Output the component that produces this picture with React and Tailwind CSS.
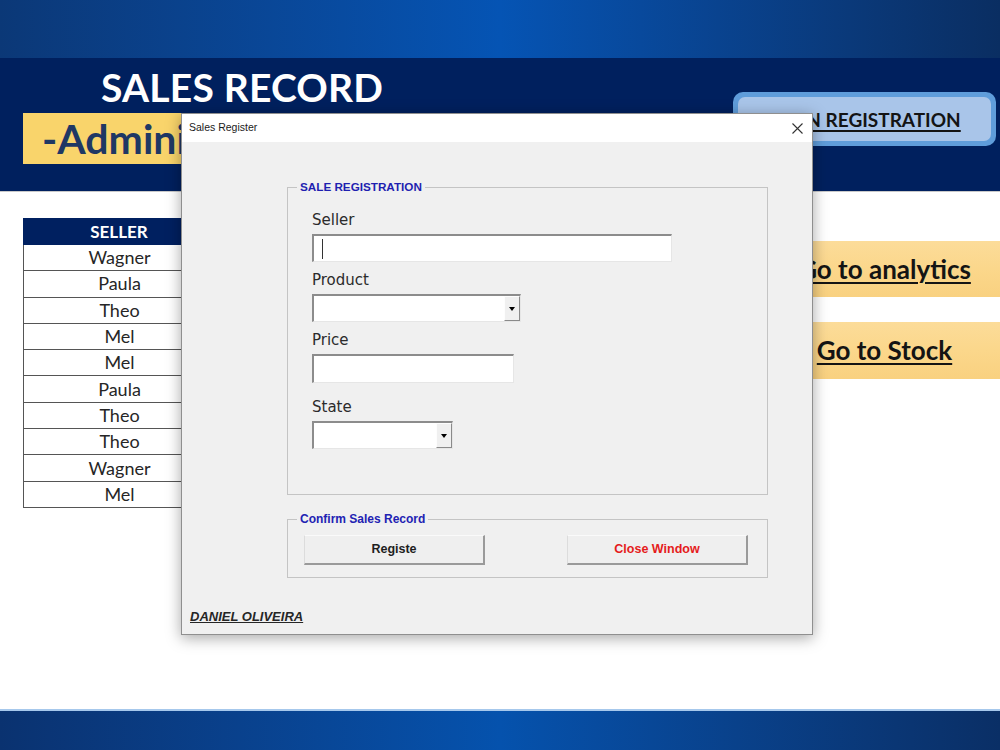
export default function App() {
  const sellers = ["Wagner", "Paula", "Theo", "Mel", "Mel", "Paula", "Theo", "Theo", "Wagner", "Mel"];

  const inputCls =
    "mt-[5px] h-[28px] bg-white border-t-2 border-l-2 border-r border-b border-t-[#8c8c8c] border-l-[#8c8c8c] border-r-[#e6e6e6] border-b-[#e6e6e6]";

  const Combo = ({ w }) => (
    <div className={`${inputCls} flex justify-end`} style={{ width: w }}>
      <div className="w-[16px] h-full bg-[#f0f0f0] border-l border-t border-l-[#fdfdfd] border-t-[#fdfdfd] border-r border-b border-r-[#8a8a8a] border-b-[#8a8a8a] flex items-center justify-center">
        <div className="w-0 h-0 border-l-[3px] border-r-[3px] border-t-[4px] border-l-transparent border-r-transparent border-t-black" />
      </div>
    </div>
  );

  return (
    <div className="relative w-[1000px] h-[750px] overflow-hidden bg-white flex flex-col font-['Lato',sans-serif]">
      {/* top bar */}
      <div className="h-[58px] bg-linear-to-r from-[#0b3877] via-[#0554b4] to-[#0a2e62]" />

      {/* navy band */}
      <div className="h-[133px] bg-[#00205e] flex">
        <div className="w-[567px] flex flex-col">
          <div className="mt-[10px] ml-[101px] text-white font-bold text-[39px] leading-none tracking-[0.2px]">
            SALES RECORD
          </div>
          <div className="mt-[6px] ml-[23px] h-[51px] bg-[#f9d46b] flex items-center pl-[19px]">
            <div className="w-[139px] overflow-hidden">
              <span className="text-[#1f3864] font-bold text-[41px] leading-none whitespace-nowrap">-Admini</span>
            </div>
          </div>
        </div>
        <div className="ml-[166px] mt-[34px] w-[263px] h-[54px] rounded-[10px] bg-[#5f9ddb] p-[5px]">
          <div className="w-full h-full rounded-[7px] bg-[#a9c5e9] flex items-center justify-center pt-[2px]">
            <span className="text-[#141414] font-bold text-[19px] underline decoration-2 underline-offset-[3px]">
              OPEN REGISTRATION
            </span>
          </div>
        </div>
      </div>

      {/* white area */}
      <div className="flex-1 flex border-t border-[#c9c9c9]">
        <div className="ml-[23px] mt-[26px] w-[192px]">
          <div className="h-[27px] bg-[#002060] text-white font-bold text-[17px] flex items-center justify-center">
            SELLER
          </div>
          {sellers.map((s, i) => (
            <div
              key={i}
              className="h-[26.3px] border-l border-b border-[#555] text-[#262626] text-[18px] flex items-center justify-center"
            >
              {s}
            </div>
          ))}
        </div>
        <div className="ml-auto mt-[49px] w-[231px] flex flex-col gap-[25px]">
          <div className="h-[56px] bg-linear-to-b from-[#fcdc99] via-[#fbd78b] to-[#f9d180] flex items-center justify-center">
            <span className="text-[#141414] font-bold text-[26px] underline decoration-2 underline-offset-[3px] whitespace-nowrap">Go to analytics</span>
          </div>
          <div className="h-[57px] bg-linear-to-b from-[#fcdc99] via-[#fbd78b] to-[#f9d180] flex items-center justify-center">
            <span className="text-[#141414] font-bold text-[26px] underline decoration-2 underline-offset-[3px] whitespace-nowrap">Go to Stock</span>
          </div>
        </div>
      </div>

      {/* bottom bar */}
      <div className="h-[41px] border-t-2 border-[#a6c8ec] bg-linear-to-r from-[#0a3270] via-[#0552ad] to-[#0a2f66]" />

      {/* dialog window */}
      <div className="absolute left-[181px] top-[113px] w-[632px] h-[522px] border border-[#8f8f8f] bg-[#f0f0f0] shadow-[0_3px_14px_rgba(0,0,0,0.35)] flex flex-col">
        <div className="h-[28px] bg-white flex items-center justify-between pl-[7px] pr-[9px]">
          <span className="text-[10.5px] text-[#1a1a1a] font-['Liberation_Sans',sans-serif]">Sales Register</span>
          <svg width="11" height="11" viewBox="0 0 11 11">
            <path d="M0.5 0.5 L10.5 10.5 M10.5 0.5 L0.5 10.5" stroke="#333" strokeWidth="1.1" />
          </svg>
        </div>

        <div className="flex flex-col font-['DejaVu_Sans',sans-serif]">
          {/* frame 1 */}
          <div className="relative ml-[105px] mt-[45px] w-[481px] h-[308px] border border-[#c4c4c4] pl-[24px] pt-[23px]">
            <span className="absolute -top-[8px] left-[9px] px-[3px] bg-[#f0f0f0] text-[11.7px] leading-[14px] font-bold text-[#1f1fb0] font-['Liberation_Sans',sans-serif]">
              SALE REGISTRATION
            </span>
            <div className="text-[15px] leading-[18px] text-[#2b2b2b]">Seller</div>
            <div className={`${inputCls} w-[360px] flex items-center pl-[8px]`}>
              <div className="w-px h-[20px] bg-[#333]" />
            </div>

            <div className="mt-[9px] text-[15px] leading-[18px] text-[#2b2b2b]">Product</div>
            <Combo w={209} />

            <div className="mt-[9px] text-[15px] leading-[18px] text-[#2b2b2b]">Price</div>
            <div className={`${inputCls} w-[202px] h-[29px]`} />

            <div className="mt-[15px] text-[15px] leading-[18px] text-[#2b2b2b]">State</div>
            <Combo w={141} />
          </div>

          {/* frame 2 */}
          <div className="relative ml-[105px] mt-[24px] w-[481px] h-[59px] border border-[#c4c4c4] flex justify-between pl-[16px] pr-[19px] pt-[15px] font-['Liberation_Sans',sans-serif]">
            <span className="absolute -top-[8px] left-[9px] px-[3px] bg-[#f0f0f0] text-[12px] leading-[14px] font-bold text-[#2222b3]">
              Confirm Sales Record
            </span>
            <div className="w-[181px] h-[30px] bg-[#efefef] border-l border-t border-l-[#dcdcdc] border-t-[#fafafa] border-r-2 border-b-2 border-r-[#9a9a9a] border-b-[#9a9a9a] flex items-center justify-center text-[12.5px] font-bold text-[#1e1e1e]">
              Registe
            </div>
            <div className="w-[181px] h-[30px] bg-[#efefef] border-l border-t border-l-[#dcdcdc] border-t-[#fafafa] border-r-2 border-b-2 border-r-[#9a9a9a] border-b-[#9a9a9a] flex items-center justify-center text-[12.5px] font-bold text-[#e51c1c]">
              Close Window
            </div>
          </div>

          <div className="ml-[8px] mt-[32px] text-[13px] leading-[14px] font-bold italic underline text-[#262626] font-['Liberation_Sans',sans-serif]">
            DANIEL OLIVEIRA
          </div>
        </div>
      </div>
    </div>
  );
}
